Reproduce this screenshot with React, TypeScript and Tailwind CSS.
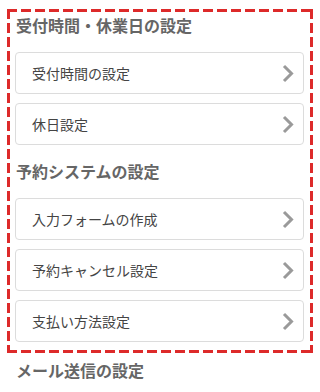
import React from "react";

const Chevron = () => (
  <svg width="12" height="19" viewBox="0 0 12 19" className="shrink-0">
    <polyline points="2,2 9.5,9.5 2,17" fill="none" stroke="#9a9a9a" strokeWidth="3" strokeLinecap="butt" strokeLinejoin="miter" />
  </svg>
);

const Card = ({ label, className = "" }: { label: string; className?: string }) => (
  <div className={`h-[42px] border border-[#dcdcdc] rounded-[4px] bg-white flex items-center justify-between pl-[16px] pr-[9px] ${className}`}>
    <span className="text-[14px] leading-[20px] text-[#444]">{label}</span>
    <Chevron />
  </div>
);

const Heading = ({ children, className = "" }: { children: React.ReactNode; className?: string }) => (
  <div className={`h-[24px] text-[16px] leading-[24px] font-bold text-[#666] pl-[1px] ${className}`}>{children}</div>
);

export default function App() {
  return (
    <div className="w-[320px] h-[392px] bg-white overflow-hidden pt-[9px] px-[7px]" style={{ fontFamily: '"Noto Sans CJK JP", "Noto Sans", sans-serif' }}>
      <div className="relative w-[306px] p-[3px]">
        <div className="absolute left-0 top-0 w-full h-[3px] bg-[repeating-linear-gradient(90deg,#dd2a2a_0_10px,transparent_10px_14px)]" />
        <div className="absolute left-0 bottom-0 w-full h-[3px] bg-[repeating-linear-gradient(90deg,#dd2a2a_0_10px,transparent_10px_14px)]" />
        <div className="absolute left-0 top-0 h-full w-[3px] bg-[repeating-linear-gradient(180deg,#dd2a2a_0_10px,transparent_10px_14px)]" />
        <div className="absolute right-0 top-0 h-full w-[3px] bg-[repeating-linear-gradient(180deg,#dd2a2a_0_10px,transparent_10px_14px)]" />
        <div className="pl-[5px] pr-[6px] pt-[1px] pb-[8px]">
          <Heading>受付時間・休業日の設定</Heading>
          <Card label="受付時間の設定" className="mt-[15px]" />
          <Card label="休日設定" className="mt-[9px]" />
          <Heading className="mt-[14px]">予約システムの設定</Heading>
          <Card label="入力フォームの作成" className="mt-[15px]" />
          <Card label="予約キャンセル設定" className="mt-[9px]" />
          <Card label="支払い方法設定" className="mt-[9px]" />
        </div>
      </div>
      <Heading className="mt-[5px] ml-[8px]">メール送信の設定</Heading>
    </div>
  );
}
